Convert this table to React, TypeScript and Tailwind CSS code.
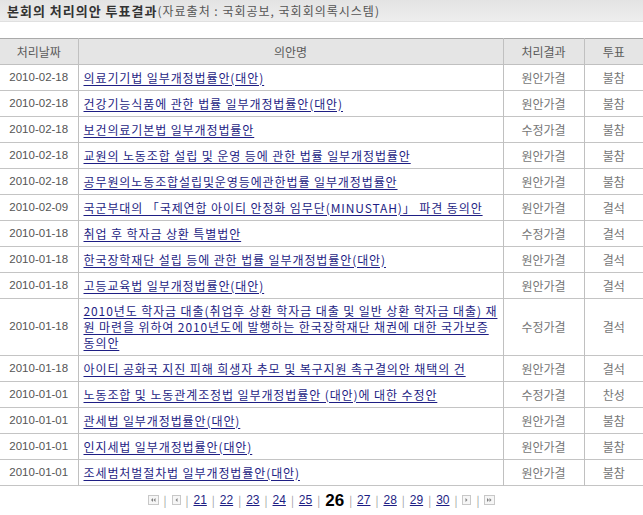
import React from "react";

type Row = { date: string; title: string; result: string; vote: string };

const rows: Row[] = [
  { date: "2010-02-18", title: "의료기기법 일부개정법률안(대안)", result: "원안가결", vote: "불참" },
  { date: "2010-02-18", title: "건강기능식품에 관한 법률 일부개정법률안(대안)", result: "원안가결", vote: "불참" },
  { date: "2010-02-18", title: "보건의료기본법 일부개정법률안", result: "수정가결", vote: "불참" },
  { date: "2010-02-18", title: "교원의 노동조합 설립 및 운영 등에 관한 법률 일부개정법률안", result: "원안가결", vote: "불참" },
  { date: "2010-02-18", title: "공무원의노동조합설립및운영등에관한법률 일부개정법률안", result: "원안가결", vote: "불참" },
  { date: "2010-02-09", title: "국군부대의 「국제연합 아이티 안정화 임무단(MINUSTAH)」 파견 동의안", result: "원안가결", vote: "결석" },
  { date: "2010-01-18", title: "취업 후 학자금 상환 특별법안", result: "수정가결", vote: "결석" },
  { date: "2010-01-18", title: "한국장학재단 설립 등에 관한 법률 일부개정법률안(대안)", result: "원안가결", vote: "결석" },
  { date: "2010-01-18", title: "고등교육법 일부개정법률안(대안)", result: "원안가결", vote: "결석" },
  {
    date: "2010-01-18",
    title:
      "2010년도 학자금 대출(취업후 상환 학자금 대출 및 일반 상환 학자금 대출) 재원 마련을 위하여 2010년도에 발행하는 한국장학재단 채권에 대한 국가보증 동의안",
    result: "수정가결",
    vote: "결석",
  },
  { date: "2010-01-18", title: "아이티 공화국 지진 피해 희생자 추모 및 복구지원 촉구결의안 채택의 건", result: "원안가결", vote: "결석" },
  { date: "2010-01-01", title: "노동조합 및 노동관계조정법 일부개정법률안 (대안)에 대한 수정안", result: "수정가결", vote: "찬성" },
  { date: "2010-01-01", title: "관세법 일부개정법률안(대안)", result: "원안가결", vote: "불참" },
  { date: "2010-01-01", title: "인지세법 일부개정법률안(대안)", result: "원안가결", vote: "불참" },
  { date: "2010-01-01", title: "조세범처벌절차법 일부개정법률안(대안)", result: "원안가결", vote: "불참" },
];

const pages = [21, 22, 23, 24, 25, 26, 27, 28, 29, 30];

function NavIcon({ dir, double }: { dir: "l" | "r"; double?: boolean }) {
  const w = double ? 11 : 9;
  const tri = (x: number) =>
    dir === "l" ? `M${x + 2} 2 L${x} 4 L${x + 2} 6 Z` : `M${x} 2 L${x + 2} 4 L${x} 6 Z`;
  return (
    <svg width={w} height="10" viewBox={`0 0 ${w} 10`} className="inline-block">
      <rect x="0.5" y="0.5" width={w - 1} height="9" fill="#f6f6f6" stroke="#c8c8c8" />
      <g transform="translate(0 1)">
        {double ? (
          <>
            <path d={tri(3)} fill="#808080" />
            <path d={tri(5.5)} fill="#808080" />
          </>
        ) : (
          <path d={tri(3.5)} fill="#808080" />
        )}
      </g>
    </svg>
  );
}

function Sep() {
  return <span className="text-[#999] text-[11px] px-[5px] leading-none">|</span>;
}

export default function App() {
  return (
    <div className="w-[643px] h-[515px] bg-white overflow-hidden font-['Noto_Sans_CJK_KR',sans-serif] text-[12px]">
      {/* Title bar */}
      <div className="h-[22px] bg-gradient-to-b from-[#e3e3e3] to-[#eeeeee] border-b border-b-[#e0e0e0] flex items-center pl-[7px] leading-none">
        <span className="font-bold text-[13px] text-[#333] tracking-[1px]">본회의 처리의안 투표결과</span>
        <span className="text-[#555] tracking-[1px]">(자료출처 : 국회공보, 국회회의록시스템)</span>
      </div>

      <table className="mt-[16px] w-full border-collapse table-fixed">
        <colgroup>
          <col className="w-[78px]" />
          <col />
          <col className="w-[81px]" />
          <col className="w-[59px]" />
        </colgroup>
        <thead>
          <tr className="bg-[#e5e5e5] text-[#5a5a5a] border-t border-t-[#aaaaaa] border-b border-b-[#c0c0c0]">
            <th className="h-[26px] font-normal border-r border-r-[#c0c0c0]">처리날짜</th>
            <th className="font-normal border-r border-r-[#c0c0c0]">의안명</th>
            <th className="font-normal border-r border-r-[#c0c0c0]">처리결과</th>
            <th className="font-normal">투표</th>
          </tr>
        </thead>
        <tbody>
          {rows.map((r, i) => (
            <tr key={i} className="border-b border-b-[#c4c4c4] text-[#555]">
              <td className="h-[26px] text-center border-r border-r-[#c0c0c0] font-['Liberation_Sans',sans-serif] text-[11.5px]">
                {r.date}
              </td>
              <td className="border-r border-r-[#c0c0c0] pl-[5px] pr-0 py-[4px] leading-[16px] tracking-[0.9px]">
                <a href="#" className="text-[#1e1e84] underline underline-offset-[2px]">
                  {r.title}
                </a>
              </td>
              <td className="text-center border-r border-r-[#c0c0c0] text-[#777]">{r.result}</td>
              <td className="text-center text-[#777]">{r.vote}</td>
            </tr>
          ))}
        </tbody>
      </table>

      {/* Pagination */}
      <div className="flex items-center justify-center h-[30px] pb-[2px] text-[12px]">
        <NavIcon dir="l" double />
        <Sep />
        <NavIcon dir="l" />
        <Sep />
        {pages.map((p, i) => (
          <React.Fragment key={p}>
            {p === 26 ? (
              <span className="font-bold text-[17px] text-black font-['Liberation_Sans',sans-serif] leading-none">26</span>
            ) : (
              <a href="#" className="text-[#1e1e84] underline font-['Liberation_Sans',sans-serif] leading-none">
                {p}
              </a>
            )}
            {i < pages.length - 1 && <Sep />}
          </React.Fragment>
        ))}
        <Sep />
        <NavIcon dir="r" />
        <Sep />
        <NavIcon dir="r" double />
      </div>
    </div>
  );
}
